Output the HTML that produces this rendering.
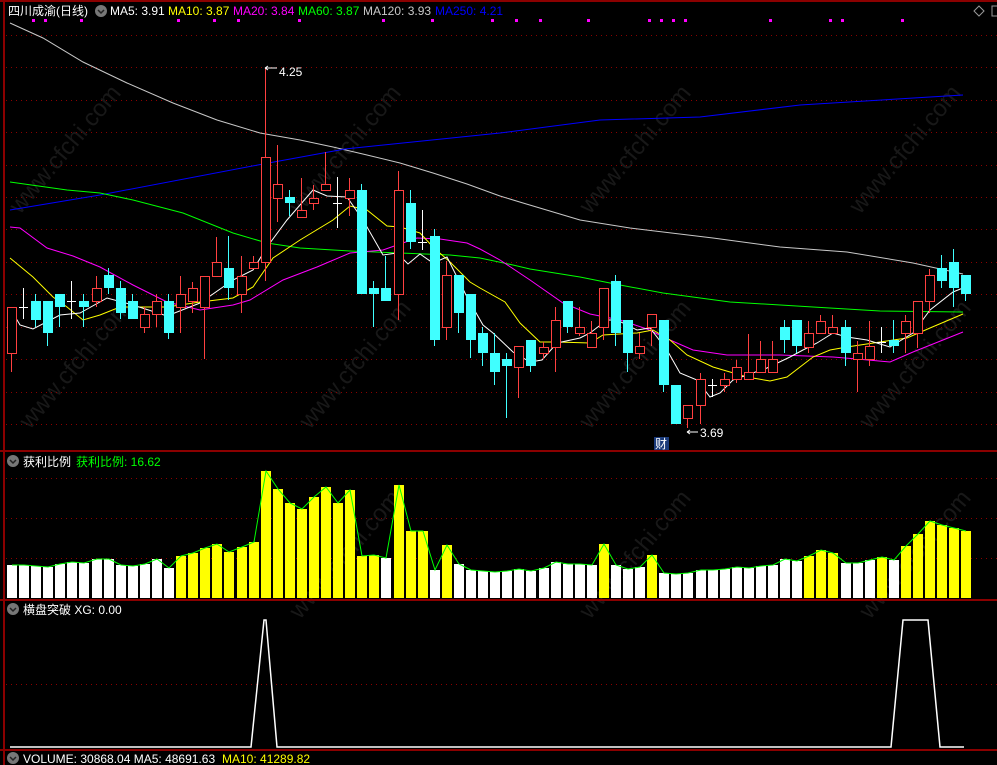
<!DOCTYPE html>
<html><head><meta charset="utf-8">
<style>
html,body{margin:0;padding:0;background:#000;width:997px;height:765px;overflow:hidden}
svg{display:block}
text{font-family:"Liberation Sans","Noto Sans CJK SC",sans-serif;font-size:12px}
.w{font-size:24px}
</style></head><body>
<svg id="s" width="997" height="765" viewBox="0 0 997 765" xmlns="http://www.w3.org/2000/svg">
<rect width="997" height="765" fill="#000"/>
<g id="wm" fill="#181818">
<text class="w" transform="translate(20,215) rotate(-50)">www.cfchi.com</text>
<text class="w" transform="translate(300,215) rotate(-50)">www.cfchi.com</text>
<text class="w" transform="translate(590,215) rotate(-50)">www.cfchi.com</text>
<text class="w" transform="translate(860,215) rotate(-50)">www.cfchi.com</text>
<text class="w" transform="translate(30,430) rotate(-50)">www.cfchi.com</text>
<text class="w" transform="translate(310,430) rotate(-50)">www.cfchi.com</text>
<text class="w" transform="translate(590,430) rotate(-50)">www.cfchi.com</text>
<text class="w" transform="translate(870,430) rotate(-50)">www.cfchi.com</text>
<text class="w" transform="translate(300,620) rotate(-50)">www.cfchi.com</text>
<text class="w" transform="translate(590,620) rotate(-50)">www.cfchi.com</text>
<text class="w" transform="translate(870,620) rotate(-50)">www.cfchi.com</text>
</g>
<g id="grid" stroke="#8b0000" stroke-width="1" stroke-dasharray="1,4"></g>
<g stroke="#8b0000" stroke-width="2" fill="none">
<line x1="0" y1="1" x2="997" y2="1"/>
<line x1="4" y1="0" x2="4" y2="765"/>
<line x1="0" y1="451" x2="997" y2="451"/>
<line x1="0" y1="600" x2="997" y2="600"/>
<line x1="0" y1="750" x2="997" y2="750"/>
</g>
<g id="ma" fill="none" stroke-width="1"></g>
<g id="cd"></g>
<g id="p2"></g>
<polyline fill="none" stroke="#fff" stroke-width="1.5" points="10,747 251,747 264,620 266,620 277,747 891,747 903,620 928,620 940,747 964,747"/>
<g id="dots" fill="#ff00ff"></g>
<text x="8" y="15" fill="#fff">四川成渝(日线)</text>
<circle cx="101" cy="11" r="6" fill="#777"/><path d="M98 10 l3 3 l3 -3" stroke="#222" stroke-width="1.5" fill="none"/>
<text x="110" y="15" fill="#fff">MA5: 3.91</text>
<text x="168" y="15" fill="#ffff00">MA10: 3.87</text>
<text x="233" y="15" fill="#ff00ff">MA20: 3.84</text>
<text x="298" y="15" fill="#00ff00">MA60: 3.87</text>
<text x="363" y="15" fill="#c8c8c8">MA120: 3.93</text>
<text x="435" y="15" fill="#0000ff">MA250: 4.21</text>
<path d="M979 6 l5 5 l-5 5 l-5 -5z" stroke="#999" fill="none"/>
<rect x="992" y="6" width="8" height="10" stroke="#999" fill="none"/>
<path d="M265 68 h12 M265 68 l3 -2 M265 68 l3 2" stroke="#fff" fill="none"/>
<text x="279" y="76" fill="#fff">4.25</text>
<path d="M687 432 h11 M687 432 l3 -2 M687 432 l3 2" stroke="#fff" fill="none"/>
<text x="700" y="437" fill="#fff">3.69</text>
<rect x="654" y="437" width="15" height="13" fill="#1a3a7a"/>
<text x="655" y="448" fill="#fff">财</text>
<circle cx="13" cy="461" r="6" fill="#777"/><path d="M10 460 l3 3 l3 -3" stroke="#222" stroke-width="1.5" fill="none"/>
<text x="23" y="466" fill="#fff">获利比例</text>
<text x="76" y="466" fill="#00ff00">获利比例: 16.62</text>
<circle cx="13" cy="609" r="6" fill="#777"/><path d="M10 608 l3 3 l3 -3" stroke="#222" stroke-width="1.5" fill="none"/>
<text x="23" y="614" fill="#fff">横盘突破  XG: 0.00</text>
<circle cx="13" cy="758" r="6" fill="#777"/><path d="M10 757 l3 3 l3 -3" stroke="#222" stroke-width="1.5" fill="none"/>
<text x="23" y="763" fill="#fff">VOLUME: 30868.04  MA5: 48691.63</text>
<text x="222" y="763" fill="#ffff00">MA10: 41289.82</text>
</svg>
<script>
var NS="http://www.w3.org/2000/svg";
function el(p,t,a){var e=document.createElementNS(NS,t);for(var k in a)e.setAttribute(k,a[k]);document.getElementById(p).appendChild(e);return e;}
var g=[35,67,100,132,165,197,229,262,294,327,359,392,424,478,518,558,684];
g.forEach(function(y){el('grid','line',{x1:6,y1:y+.5,x2:997,y2:y+.5});});
[33,45,81,178,214,238,299,383,432,492,516,540,588,649,661,673,685,770,830,842,902].forEach(function(x){el('dots','rect',{x:x-1,y:19,width:3,height:3});});
var L={
'#c8c8c8':"10,23 43,38 83,62 127,83 173,103 217,120 260,133 300,140 333,147 367,155 400,163 433,173 467,184 500,196 523,203 580,220 630,228 713,238 780,247 847,252 913,263 963,274",
'#0000ff':"10,210 100,195 263,164 345,149 500,133 600,120 700,117 800,105 963,95",
'#00ff00':"10,182 67,190 100,193 133,200 183,213 233,233 267,243 300,248 350,251 400,253 450,255 480,258 513,265 530,269 580,277 620,285 663,293 730,302 813,307 880,311 963,312",
'#ff00ff':"10,227 20,228 47,248 73,256 100,267 133,285 167,302 200,310 233,305 250,300 283,280 317,267 350,253 383,250 417,238 440,239 467,243 480,249 500,260 530,280 563,303 590,314 620,320 647,329 670,340 693,350 727,355 780,355 833,357 857,359 890,362 913,352 963,332",
'#ffff00':"10,258 33,277 53,297 67,307 83,320 100,315 120,307 167,307 200,302 233,298 253,287 273,258 300,240 333,220 350,206 367,210 387,226 400,227 420,233 433,247 450,262 470,282 480,288 505,302 520,323 540,342 557,342 590,343 603,335 637,333 653,330 670,340 687,355 713,367 747,377 770,381 787,377 813,357 830,350 847,347 880,342 907,338 930,328 963,314",
'#ffffff':"10,308 20,325 33,329 60,315 80,313 107,298 133,305 167,316 200,303 233,280 253,270 267,247 287,220 313,190 327,196 347,197 363,220 383,255 397,253 408,264 420,254 433,263 447,257 467,297 483,325 493,333 513,352 530,362 542,360 557,343 580,338 590,333 607,320 617,320 637,330 650,328 667,350 680,373 697,380 710,397 720,393 733,380 747,375 767,368 790,357 803,350 817,343 833,333 847,337 867,340 890,347 913,333 930,310 953,292 963,288"};
for(var c in L)el('ma','polyline',{points:L[c],stroke:c});
var C=[[307,353,307,372,'r'],[307,307,288,319,'w'],[301,320,294,327,'c'],[301,333,301,346,'c'],[294,307,294,327,'c'],[301,301,281,319,'w'],[301,307,294,327,'c'],[288,301,276,307,'r'],[275,288,268,294,'c'],[288,313,281,319,'c'],
[301,319,294,319,'c'],[314,327,307,333,'r'],[301,314,294,327,'r'],[301,333,294,339,'c'],[294,307,276,333,'r'],[288,301,282,313,'r'],[276,307,276,359,'r'],[262,276,237,276,'r'],[268,288,236,300,'c'],[276,294,256,313,'r'],
[262,268,256,268,'r'],[157,262,68,281,'r'],[184,198,145,222,'r'],[197,203,190,216,'c'],[210,217,178,217,'r'],[198,203,185,210,'r'],[184,190,152,190,'r'],[203,203,177,228,'w'],[190,198,178,216,'r'],[190,294,184,294,'c'],
[288,294,281,327,'c'],[288,301,256,301,'c'],[190,294,171,320,'r'],[203,242,190,249,'c'],[242,242,210,250,'w'],[236,340,229,346,'c'],[275,327,261,340,'r'],[275,313,275,333,'c'],[294,340,294,358,'c'],[333,353,327,366,'c'],
[353,372,333,385,'c'],[359,366,353,418,'c'],[346,367,346,398,'r'],[340,366,340,372,'c'],[347,353,342,359,'r'],[320,347,307,372,'r'],[301,327,301,333,'c'],[327,333,307,336,'r'],[333,347,321,347,'r'],[288,327,288,340,'r'],
[281,333,275,346,'c'],[320,353,320,372,'c'],[346,353,333,359,'r'],[314,327,314,346,'r'],[320,385,320,392,'c'],[385,424,385,424,'c'],[405,418,405,428,'r'],[379,405,373,424,'r'],[385,385,379,397,'w'],[379,385,373,392,'r'],
[367,379,360,383,'r'],[372,379,334,379,'r'],[359,372,341,372,'r'],[359,372,341,372,'r'],[327,340,320,353,'c'],[320,346,320,353,'c'],[333,347,321,353,'r'],[321,333,315,333,'r'],[327,333,315,333,'r'],[327,353,320,366,'c'],
[353,359,341,392,'r'],[346,359,321,366,'r'],[342,342,327,353,'w'],[340,346,320,353,'c'],[321,333,315,353,'r'],[301,333,301,348,'r'],[275,301,269,313,'r'],[268,281,255,288,'c'],[262,288,249,307,'c'],[275,294,275,301,'c']];
var col={r:'#ff4040',c:'#40ffff',w:'#ffffff'};
C.forEach(function(d,i){var x=Math.round(11+12.08*i),k=col[d[4]];
el('cd','line',{x1:x+.5,y1:d[2],x2:x+.5,y2:d[3],stroke:k});
if(d[4]=='w'){el('cd','line',{x1:x-4,y1:d[0]+.5,x2:x+5,y2:d[0]+.5,stroke:k});}
else if(d[4]=='r'){el('cd','rect',{x:x-3.5,y:d[0]+.5,width:9,height:Math.max(1,d[1]-d[0]),fill:'#000',stroke:k});}
else el('cd','rect',{x:x-4,y:d[0],width:10,height:Math.max(2,d[1]-d[0]),fill:k});});
var P=[565,565,566,567,564,562,563,559,559,565,566,564,559,568,556,553,548,544,552,547,542,471,489,503,509,497,487,503,490,556,555,558,485,531,531,570,545,564,570,571,572,571,569,571,568,562,564,564,565,544,565,569,567,555,573,574,573,570,570,569,567,568,566,565,559,561,556,550,553,563,563,560,557,560,546,534,521,525,528,531];
var Y={14:1,15:1,16:1,17:1,18:1,19:1,20:1,21:1,22:1,23:1,24:1,25:1,26:1,27:1,28:1,29:1,30:1,32:1,33:1,34:1,36:1,49:1,53:1,66:1,67:1,68:1,72:1,74:1,75:1,76:1,77:1,78:1,79:1};
var pts=[];
P.forEach(function(t,i){var x=Math.round(7+12.08*i);el('p2','rect',{x:x,y:t,width:10,height:598-t,fill:Y[i]?'#ffff00':'#ffffff'});pts.push((x+5)+','+t);});
el('p2','polyline',{points:pts.join(' '),fill:'none',stroke:'#00ff00'});
</script>
</body></html>
